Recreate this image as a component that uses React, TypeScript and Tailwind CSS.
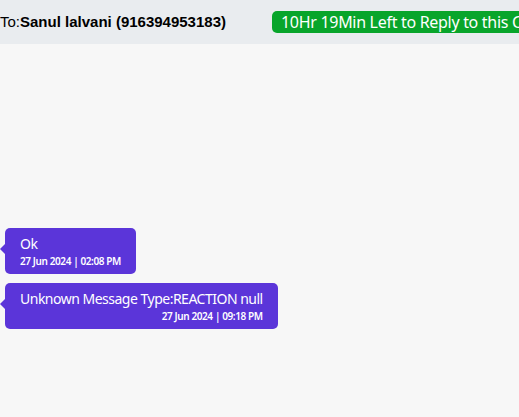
import React from "react";

type Message = {
	id: number;
	text: string;
	time: string;
};

const messages: Message[] = [
	{ id: 1, text: "Ok", time: "27 Jun 2024 | 02:08 PM" },
	{ id: 2, text: "Unknown Message Type:REACTION null", time: "27 Jun 2024 | 09:18 PM" },
];

const Bubble: React.FC<{ message: Message }> = ({ message }) => {
	return (
		<div className="relative ml-[5px] self-start">
			<span className="absolute left-[-5px] top-[16px] h-0 w-0 border-y-[5px] border-r-[5px] border-y-transparent border-r-[#5b35d9]"></span>
			<div className="flex flex-col rounded-[5px] bg-[#5b35d9] px-[15px] pt-[6px] pb-[6px] text-white font-['Noto_Sans',sans-serif]">
				<span className="text-[14px] leading-[20px] tracking-[-0.5px]">{message.text}</span>
				<span className="self-end text-[10px] font-semibold leading-[14px] tracking-[-0.4px]">
					{message.time}
				</span>
			</div>
		</div>
	);
};

const App: React.FC = () => {
	return (
		<div className="h-screen w-full overflow-hidden bg-[#f7f7f7]">
			<header className="flex h-[44px] items-center whitespace-nowrap bg-[#e9ecef]">
				<div className="w-[272px] shrink-0 text-[15px] text-black font-['Liberation_Sans',sans-serif]">
					To:<span className="font-bold">Sanul lalvani (916394953183)</span>
				</div>
				<div className="shrink-0 rounded-[5px] bg-[#08a52b] px-[9px] text-[16px] leading-[22px] tracking-[-0.3px] text-white font-['Noto_Sans',sans-serif]">
					10Hr 19Min Left to Reply to this Chat
				</div>
			</header>
			<div className="flex flex-col gap-[9px] pt-[184px]">
				{messages.map((m) => (
					<Bubble key={m.id} message={m} />
				))}
			</div>
		</div>
	);
};

export default App;
